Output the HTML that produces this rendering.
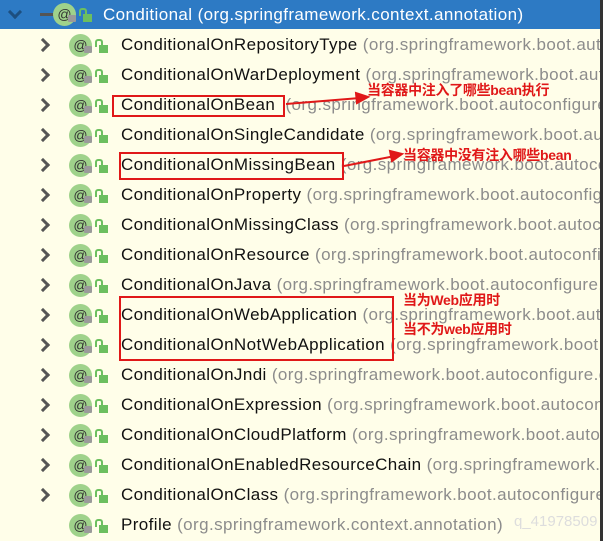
<!DOCTYPE html><html><head><meta charset="utf-8"><style>
body{margin:0;width:603px;height:541px;overflow:hidden;background:#fffee9;font-family:"Liberation Sans","Noto Sans CJK SC",sans-serif;position:relative}
.r{position:absolute;left:0;width:603px;height:30px;font-size:17px;letter-spacing:0.4px;line-height:30px;white-space:nowrap;overflow:hidden}
.n{position:absolute;left:121px;color:#111}
.n span{color:#8c8c8c}
.ch{position:absolute;left:38px;top:10px;width:7px;height:7px;border-right:3px solid #555;border-top:3px solid #555;transform:rotate(45deg)}
.ic{position:absolute;left:69px;top:4px;width:23px;height:23px;border-radius:50%;background:#9fd28b;color:#333;font-size:14px;letter-spacing:0;line-height:22px;text-align:center}
.lk{position:absolute;left:84px;top:16px;width:8px;height:7px;background:#9a9a9a;border-radius:1px}
.ul{position:absolute;left:99px;top:15px;width:9px;height:8px;background:#6cbf5f}
.ul:before{content:"";position:absolute;left:-4px;top:-6px;width:4px;height:6px;border:2px solid #6cbf5f;border-bottom:none;border-radius:3px 3px 0 0}
.box{position:absolute;border:2px solid #e01818}
.t{position:absolute;color:#e01818;font-weight:bold;font-size:14px;letter-spacing:-0.3px;white-space:nowrap}
</style></head><body>
<div class="r" style="top:0;background:#2d7ac4;height:29px"><div style="position:absolute;left:10px;top:7px;width:7px;height:7px;border-right:3px solid #1d4f80;border-bottom:3px solid #1d4f80;transform:rotate(45deg)"></div><div style="position:absolute;left:40px;top:13px;width:14px;height:3px;background:#555"></div><div class="ic" style="left:53px;top:3px">@</div><div class="lk" style="left:68px;top:15px"></div><div class="ul" style="left:83px;top:14px"></div><div class="n" style="left:103px;color:#fff">Conditional (org.springframework.context.annotation)</div></div>
<div class="r" style="top:30px"><i class="ch"></i><div class="ic">@</div><div class="lk"></div><div class="ul"></div><div class="n">ConditionalOnRepositoryType <span>(org.springframework.boot.autoconfigure.condition)</span></div></div>
<div class="r" style="top:60px"><i class="ch"></i><div class="ic">@</div><div class="lk"></div><div class="ul"></div><div class="n">ConditionalOnWarDeployment <span>(org.springframework.boot.autoconfigure.condition)</span></div></div>
<div class="r" style="top:90px"><i class="ch"></i><div class="ic">@</div><div class="lk"></div><div class="ul"></div><div class="n">ConditionalOnBean &nbsp;<span>(org.springframework.boot.autoconfigure.condition)</span></div></div>
<div class="r" style="top:120px"><i class="ch"></i><div class="ic">@</div><div class="lk"></div><div class="ul"></div><div class="n">ConditionalOnSingleCandidate <span>(org.springframework.boot.autoconfigure.condition)</span></div></div>
<div class="r" style="top:150px"><i class="ch"></i><div class="ic">@</div><div class="lk"></div><div class="ul"></div><div class="n">ConditionalOnMissingBean <span>(org.springframework.boot.autoconfigure.condition)</span></div></div>
<div class="r" style="top:180px"><i class="ch"></i><div class="ic">@</div><div class="lk"></div><div class="ul"></div><div class="n">ConditionalOnProperty <span>(org.springframework.boot.autoconfigure.condition)</span></div></div>
<div class="r" style="top:210px"><i class="ch"></i><div class="ic">@</div><div class="lk"></div><div class="ul"></div><div class="n">ConditionalOnMissingClass <span>(org.springframework.boot.autoconfigure.condition)</span></div></div>
<div class="r" style="top:240px"><i class="ch"></i><div class="ic">@</div><div class="lk"></div><div class="ul"></div><div class="n">ConditionalOnResource <span>(org.springframework.boot.autoconfigure.condition)</span></div></div>
<div class="r" style="top:270px"><i class="ch"></i><div class="ic">@</div><div class="lk"></div><div class="ul"></div><div class="n">ConditionalOnJava <span>(org.springframework.boot.autoconfigure.condition)</span></div></div>
<div class="r" style="top:300px"><i class="ch"></i><div class="ic">@</div><div class="lk"></div><div class="ul"></div><div class="n">ConditionalOnWebApplication <span>(org.springframework.boot.autoconfigure.condition)</span></div></div>
<div class="r" style="top:330px"><i class="ch"></i><div class="ic">@</div><div class="lk"></div><div class="ul"></div><div class="n">ConditionalOnNotWebApplication <span>(org.springframework.boot.autoconfigure.condition)</span></div></div>
<div class="r" style="top:360px"><i class="ch"></i><div class="ic">@</div><div class="lk"></div><div class="ul"></div><div class="n">ConditionalOnJndi <span>(org.springframework.boot.autoconfigure.condition)</span></div></div>
<div class="r" style="top:390px"><i class="ch"></i><div class="ic">@</div><div class="lk"></div><div class="ul"></div><div class="n">ConditionalOnExpression <span>(org.springframework.boot.autoconfigure.condition)</span></div></div>
<div class="r" style="top:420px"><i class="ch"></i><div class="ic">@</div><div class="lk"></div><div class="ul"></div><div class="n">ConditionalOnCloudPlatform <span>(org.springframework.boot.autoconfigure.condition)</span></div></div>
<div class="r" style="top:450px"><i class="ch"></i><div class="ic">@</div><div class="lk"></div><div class="ul"></div><div class="n">ConditionalOnEnabledResourceChain <span>(org.springframework.boot.autoconfigure.condition)</span></div></div>
<div class="r" style="top:480px"><i class="ch"></i><div class="ic">@</div><div class="lk"></div><div class="ul"></div><div class="n">ConditionalOnClass <span>(org.springframework.boot.autoconfigure.condition)</span></div></div>
<div class="r" style="top:510px"><div class="ic">@</div><div class="lk"></div><div class="ul"></div><div class="n">Profile <span>(org.springframework.context.annotation)</span></div></div>
<div style="position:absolute;left:514px;top:513px;font-size:15px;color:#ddd">q_41978509</div>
<div style="position:absolute;left:600px;top:0;width:3px;height:541px;background:#333"></div>
<div class="box" style="left:112px;top:95px;width:169px;height:18px"></div>
<div class="box" style="left:119px;top:152px;width:221px;height:24px"></div>
<div class="box" style="left:119px;top:296px;width:271px;height:61px"></div>
<svg style="position:absolute;left:0;top:0" width="603" height="541"><g stroke="#e01818" stroke-width="2" fill="#e01818"><line x1="286" y1="104" x2="360" y2="98"/><polygon points="368,97 356,93 357,103"/><line x1="344" y1="166" x2="395" y2="156"/><polygon points="402,154 390,151 392,161"/></g></svg>
<div class="t" style="left:367px;top:80px">当容器中注入了哪些bean执行</div>
<div class="t" style="left:403px;top:145px">当容器中没有注入哪些bean</div>
<div class="t" style="left:403px;top:290px">当为Web应用时</div>
<div class="t" style="left:403px;top:319px">当不为web应用时</div>
</body></html>
